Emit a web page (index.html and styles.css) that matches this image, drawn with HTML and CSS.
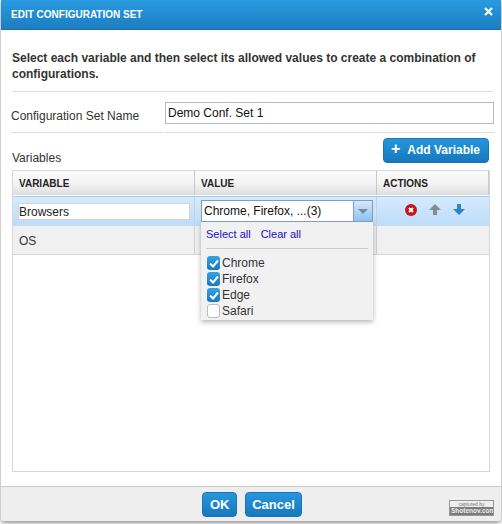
FILE: index.html
```html
<!DOCTYPE html>
<html lang="en">
<head>
    <meta charset="UTF-8">
    <title>Edit Configuration Set</title>
    <link rel="stylesheet" href="styles.css">
</head>
<body>
    <div class="dialog">
        <div class="dialog-header">
            <span class="dialog-title">EDIT CONFIGURATION SET</span>
            <svg class="dialog-close" width="9" height="9" viewBox="0 0 9 9"><path d="M1 1L8 8M8 1L1 8" stroke="#fff" stroke-width="2.2"/></svg>
        </div>

        <div class="dialog-body">
            <p class="intro">Select each variable and then select its allowed values to create a combination of configurations.</p>

            <div class="name-row">
                <label class="name-label">Configuration Set Name</label>
                <div class="name-field"><input class="name-input" type="text" value="Demo Conf. Set 1"></div>
            </div>

            <div class="variables-bar">
                <span class="variables-label">Variables</span>
                <button class="btn btn-add"><span class="btn-plus">+</span><span>Add Variable</span></button>
            </div>

            <div class="grid">
                <div class="grid-head">
                    <div class="cell-head">VARIABLE</div>
                    <div class="cell-head">VALUE</div>
                    <div class="cell-head">ACTIONS</div>
                </div>
                <div class="grid-row grid-row-active">
                    <div class="cell"><input class="var-input" type="text" value="Browsers"></div>
                    <div class="cell cell-value">
                        <div class="combo">
                            <span class="combo-text">Chrome, Firefox, ...(3)</span>
                            <span class="combo-arrow"></span>
                        </div>

                        <!-- dropdown hangs over the rows below -->
                        <div class="dropdown">
                            <div class="dropdown-links">
                                <a class="link">Select all</a>
                                <a class="link">Clear all</a>
                            </div>
                            <div class="option"><span class="check check-on"><svg width="10" height="9" viewBox="0 0 10 9"><path d="M1 4.5L4 7.5L9 1.5" fill="none" stroke="#fff" stroke-width="2"/></svg></span>Chrome</div>
                            <div class="option"><span class="check check-on"><svg width="10" height="9" viewBox="0 0 10 9"><path d="M1 4.5L4 7.5L9 1.5" fill="none" stroke="#fff" stroke-width="2"/></svg></span>Firefox</div>
                            <div class="option"><span class="check check-on"><svg width="10" height="9" viewBox="0 0 10 9"><path d="M1 4.5L4 7.5L9 1.5" fill="none" stroke="#fff" stroke-width="2"/></svg></span>Edge</div>
                            <div class="option"><span class="check"></span>Safari</div>
                        </div>
                    </div>
                    <div class="cell cell-actions">
                        <svg width="12" height="12" viewBox="0 0 12 12"><circle cx="6" cy="6" r="6" fill="#c4161c"/><path d="M4 4L8 8M8 4L4 8" stroke="#fff" stroke-width="2"/></svg>
                        <svg width="12" height="11" viewBox="0 0 12 11"><path d="M6 0L12 6H8V11H4V6H0Z" fill="#858c90"/></svg>
                        <svg width="12" height="11" viewBox="0 0 12 11"><path d="M6 11L12 5H8V0H4V5H0Z" fill="#2f86c5"/></svg>
                    </div>
                </div>
                <div class="grid-row">
                    <div class="cell">OS</div>
                    <div class="cell"></div>
                    <div class="cell"></div>
                </div>
            </div>
        </div>

        <div class="dialog-footer">
            <button class="btn btn-footer btn-ok">OK</button>
            <button class="btn btn-footer">Cancel</button>
            <div class="stamp">
                <span class="stamp-top">captured by</span>
                <span class="stamp-bottom">Shotenov.com</span>
            </div>
        </div>
    </div>
</body>
</html>
```

FILE: styles.css
```css
* {
    box-sizing: border-box;
}
html, body {
    margin: 0;
    height: 100%;
    background: #fff;
}
body {
    font-family: "Liberation Sans", Arial, sans-serif;
    font-size: 12px;
    color: #333;
    overflow: hidden;
}
.dialog {
    width: 500px;
    height: 521px;
    margin-left: 1px;
    border-radius: 0 0 4px 4px;
    background: #fff;
    box-shadow: 0 2px 5px rgba(0,0,0,0.45);
    display: flex;
    flex-direction: column;
}
.dialog-header {
    height: 30px;
    flex: none;
    padding: 9px 8px 0 10px;
    background: linear-gradient(#2a9be0, #1b7dc1);
    border-bottom: 1px solid #1a72b0;
    display: flex;
    justify-content: space-between;
    align-items: flex-start;
}
.dialog-title {
    color: #fff;
    font-size: 10px;
    font-weight: bold;
    line-height: 11px;
}
.dialog-close {
    margin-top: -2px;
}
.dialog-body {
    flex: 1;
    padding: 20px 7px 14px 11px;
    display: flex;
    flex-direction: column;
}
.intro {
    margin: 0 1px 0 0;
    padding-bottom: 9px;
    border-bottom: 1px solid #ddd;
    font-size: 12px;
    font-weight: bold;
    line-height: 16px;
    width: 481px;
}
.name-row {
    display: flex;
    gap: 2px;
    height: 41px;
}
.name-label {
    width: 152px;
    margin-left: -1px;
    border-bottom: 1px solid #ddd;
    padding-top: 17px;
    line-height: 14px;
}
.name-field {
    flex: 1;
    border-bottom: 1px solid #ddd;
    padding-top: 10px;
}
.name-input {
    display: block;
    width: 329px;
    height: 22px;
    padding: 0 2px;
    border: 1px solid #b5b9c0;
    font-family: inherit;
    font-size: 12px;
    color: #111;
    outline: 0;
}
.variables-bar {
    height: 37px;
    padding: 5px 5px 0 0;
    display: flex;
    justify-content: space-between;
    align-items: flex-start;
}
.variables-label {
    margin-top: 13px;
    line-height: 14px;
}
.btn {
    border: 1px solid #1a75b5;
    border-radius: 4px;
    background: linear-gradient(#2696dc, #1678bd);
    color: #fff;
    font-family: inherit;
    font-weight: bold;
    padding: 0;
}
.btn-add {
    width: 106px;
    height: 25px;
    padding: 0 8px 2px 7px;
    font-size: 12px;
    display: flex;
    align-items: center;
    justify-content: space-between;
}
.btn-plus {
    font-size: 16px;
    line-height: 14px;
    margin-top: -2px;
}
.grid {
    flex: 1;
    width: 478px;
    border: 1px solid #d8d8d8;
}
.grid-head {
    height: 25px;
    display: grid;
    grid-template-columns: 182px 182px 1fr;
    background: linear-gradient(#fafafa, #f4f4f4 50%, #dedede);
    border-bottom: 1px solid #fff;
}
.cell-head {
    padding: 6px 6px 0;
    font-size: 10px;
    font-weight: bold;
    line-height: 13px;
    color: #222;
    border-right: 1px solid #c8c8c8;
}
.grid-row {
    height: 29px;
    display: grid;
    grid-template-columns: 182px 182px 1fr;
    background: #f0f0f0;
    border-bottom: 1px solid #d8d8d8;
}
.grid-row-active {
    height: 30px;
    background: linear-gradient(#d6eafc, #bcdcfa);
    border-top: 1px solid #9fcdf5;
    border-bottom: 0;
}
.cell {
    padding: 8px 6px 0;
    line-height: 14px;
    border-right: 1px solid #d0d0d0;
}
.cell:last-child {
    border-right: 0;
}
.var-input {
    display: block;
    width: 172px;
    height: 17px;
    margin: -2px 0 0 -1px;
    padding: 0;
    border: 1px solid #d4d4d4;
    font-family: inherit;
    font-size: 12px;
    color: #222;
    outline: 0;
}
.cell-value {
    position: relative;
    padding: 3px 6px 0;
}
.combo {
    width: 172px;
    height: 22px;
    border: 1px solid #7c9fbf;
    background: #fff;
    display: flex;
    position: relative;
    z-index: 2;
}
.combo-text {
    flex: 1;
    padding: 3px 0 0 2px;
    color: #111;
    line-height: 14px;
}
.combo-arrow {
    width: 19px;
    background: linear-gradient(#d5e8fa, #8fc1ee);
    border-left: 1px solid #7c9fbf;
    position: relative;
}
.combo-arrow::after {
    content: "";
    position: absolute;
    left: 4px;
    top: 8px;
    border: 5px solid transparent;
    border-top: 5px solid #6d8bab;
    border-bottom: 0;
}
.dropdown {
    position: absolute;
    left: 6px;
    top: 25px;
    width: 172px;
    height: 98px;
    padding: 6px 5px 0;
    background: #f1f1f1;
    box-shadow: 0 2px 5px rgba(0,0,0,0.3);
    z-index: 1;
}
.dropdown-links {
    display: flex;
    gap: 10px;
    margin-bottom: 6px;
    border-bottom: 1px solid #ccc;
    height: 21px;
    font-size: 11px;
    line-height: 13px;
}
.link {
    color: #1a0dd8;
}
.option {
    display: flex;
    align-items: center;
    height: 16px;
    padding-left: 1px;
    font-size: 12px;
    line-height: 16px;
}
.check {
    width: 13px;
    height: 14px;
    margin-right: 2px;
    border: 1px solid #bbb;
    border-radius: 3px;
    background: #fff;
    display: flex;
    align-items: center;
    justify-content: center;
}
.check-on {
    border: 0;
    background: linear-gradient(#35a2e4, #1679bf);
}
.cell-actions {
    padding: 7px 0 0 28px;
    display: flex;
    gap: 12px;
    align-items: flex-start;
}
.dialog-footer {
    height: 35px;
    flex: none;
    padding: 5px 0 0 2px;
    background: #eee;
    border-top: 1px solid #ccc;
    border-radius: 0 0 4px 4px;
    display: flex;
    justify-content: center;
    gap: 8px;
    position: relative;
}
.btn-footer {
    height: 25px;
    padding: 0 6px;
    font-size: 13px;
}
.btn-ok {
    width: 35px;
}
.stamp {
    position: absolute;
    left: 448px;
    top: 13px;
    width: 45px;
    height: 16px;
    border: 1px solid #999;
    display: flex;
    flex-direction: column;
    overflow: hidden;
}
.stamp-top {
    height: 6px;
    background: #eee;
    color: #777;
    font-size: 5px;
    line-height: 6px;
    text-align: center;
}
.stamp-bottom {
    flex: 1;
    background: #7b7b7b;
    color: #eee;
    font-size: 6.5px;
    font-weight: bold;
    line-height: 8px;
    padding-left: 1px;
}
```
